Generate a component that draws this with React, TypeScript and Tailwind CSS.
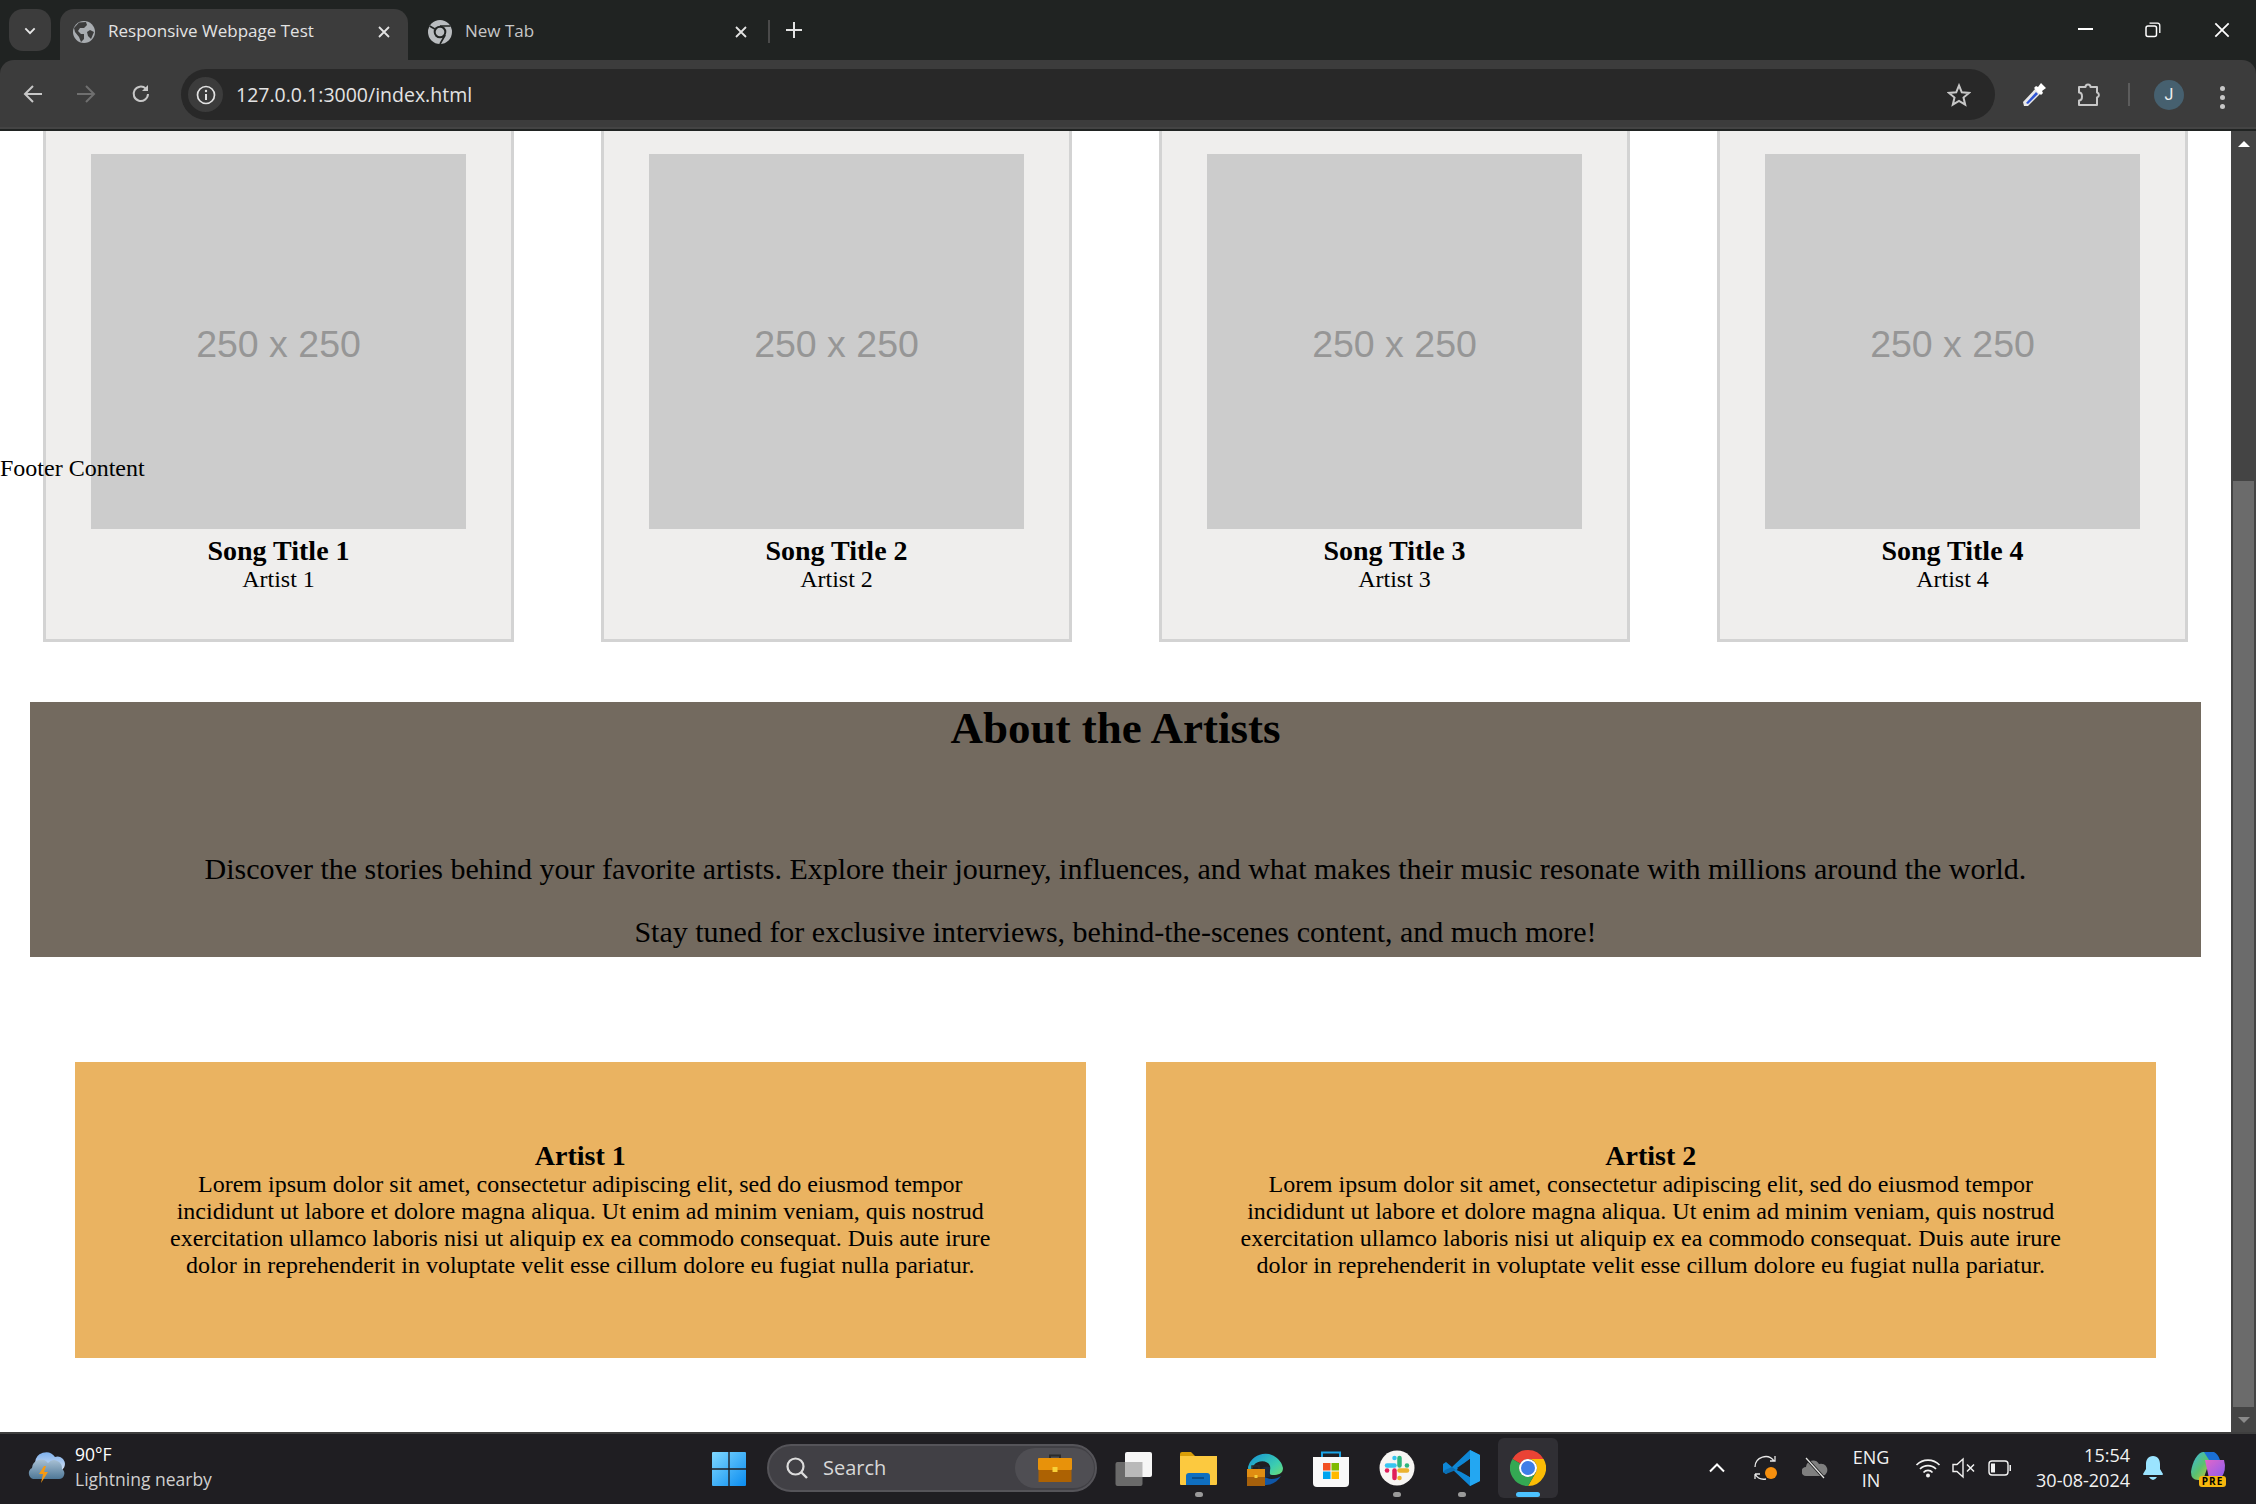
import React from "react";

const UI = "font-['Open_Sans',sans-serif]";
const SERIF = "font-['Liberation_Serif',serif]";

function GlobeFav() {
  return (
    <svg width="24" height="24" viewBox="0 0 24 24">
      <circle cx="12" cy="12" r="11" fill="#a9adb1" />
      <path d="M7 2.6 L14 2 L15 5 L12 8 L8 8 L6 11 L9 14 L12 14 L12 19 L9 22 L7 17 L3 12 L2 8Z" fill="#3c3c3c" />
      <path d="M22 12 L18 10 L15 12 L16 16 L19 19 Z" fill="#3c3c3c" />
    </svg>
  );
}
function ChromeGlyph() {
  return (
    <svg width="24" height="24" viewBox="0 0 36 36">
      <circle cx="18" cy="18" r="18" fill="#b9bcbf" />
      <path d="M18 9H34M25.8 22.5L18 36M10.2 13.5L2.4 9" stroke="#202322" strokeWidth="2.5" fill="none" />
      <circle cx="18" cy="18" r="9.5" fill="#202322" />
      <circle cx="18" cy="18" r="6.5" fill="#b9bcbf" />
    </svg>
  );
}
function XIcon({ s = 12, w = 1.8, c = "#e3e3e3" }: { s?: number; w?: number; c?: string }) {
  return (
    <svg width={s} height={s} viewBox="0 0 12 12">
      <path d="M1 1L11 11M11 1L1 11" stroke={c} strokeWidth={w} />
    </svg>
  );
}
function Arrow({ c, flip }: { c: string; flip?: boolean }) {
  return (
    <svg width="22" height="22" viewBox="0 0 22 22" className={flip ? "-scale-x-100" : ""}>
      <path d="M20 11H3M11 3L3 11L11 19" stroke={c} strokeWidth="2" fill="none" />
    </svg>
  );
}
function Reload() {
  return (
    <svg width="22" height="22" viewBox="0 0 22 22">
      <path d="M18 11A7.2 7.2 0 1 1 15.8 5.6" stroke="#c7c7c7" strokeWidth="2" fill="none" />
      <path d="M18 2V8H12Z" fill="#c7c7c7" />
    </svg>
  );
}
function Info() {
  return (
    <svg width="20" height="20" viewBox="0 0 20 20">
      <circle cx="10" cy="10" r="8.5" stroke="#e3e3e3" strokeWidth="1.7" fill="none" />
      <path d="M10 9V15" stroke="#e3e3e3" strokeWidth="2" />
      <circle cx="10" cy="6" r="1.2" fill="#e3e3e3" />
    </svg>
  );
}
function Star() {
  return (
    <svg width="24" height="24" viewBox="0 0 24 24">
      <path d="M12 2.5L14.8 9.3L22 9.9L16.5 14.6L18.2 21.7L12 17.9L5.8 21.7L7.5 14.6L2 9.9L9.2 9.3Z" stroke="#c7c7c7" strokeWidth="2" fill="none" />
    </svg>
  );
}
function Dropper() {
  return (
    <svg width="26" height="26" viewBox="0 0 26 26">
      <path d="M3 24L2 20L15 6L20 11L7 24Z" fill="#e8e8e8" />
      <path d="M5 21L15 10L17 12L7 22Z" fill="#2f55d4" />
      <path d="M13 6L15 4L17 5L20 1L25 6L21 9L22 11L20 13Z" fill="#fff" />
    </svg>
  );
}
function Puzzle() {
  return (
    <svg width="26" height="26" viewBox="0 0 26 26">
      <path d="M3 5H9.5A2.5 2.5 0 0 1 14.5 5H21V10.5A2.6 2.6 0 0 1 21 15.5V23H3V18.5C7 18.5 7 10.5 3 10.5Z" stroke="#c7c7c7" strokeWidth="2" fill="none" strokeLinejoin="round" />
    </svg>
  );
}
function MinIcon() {
  return <div className="w-[15px] h-[2px] bg-white" />;
}
function Restore() {
  return (
    <svg width="16" height="16" viewBox="0 0 16 16">
      <rect x="1" y="4" width="10.5" height="10.5" rx="2" stroke="#fff" strokeWidth="1.5" fill="none" />
      <path d="M4.5 1.2H12.5A2.5 2.5 0 0 1 14.8 3.7V11" stroke="#fff" strokeWidth="1.3" fill="none" />
    </svg>
  );
}

function Weather() {
  return (
    <svg width="38" height="34" viewBox="0 0 38 34">
      <defs>
        <linearGradient id="wa" x1="0" y1="0" x2="0" y2="1">
          <stop offset="0" stopColor="#7fb2ee" />
          <stop offset="1" stopColor="#d5e1f2" />
        </linearGradient>
        <linearGradient id="wb" x1="0" y1="0" x2="0" y2="1">
          <stop offset="0" stopColor="#a8c0d4" />
          <stop offset="1" stopColor="#4f7897" />
        </linearGradient>
      </defs>
      <path d="M7 12A11 11 0 0 1 27 6A7 7 0 0 1 32 20H10Z" fill="url(#wa)" />
      <path d="M5 28A6 6 0 0 1 4 17A9 9 0 0 1 20 12A8 8 0 0 1 34 18A5.500 5.500 0 0 1 31 28Z" fill="url(#wb)" />
      <path d="M16 15L11 23H15L13 32L20 21H16L18 15Z" fill="#f59a14" />
    </svg>
  );
}
function WinLogo() {
  return (
    <svg width="36" height="36" viewBox="0 0 36 36">
      <defs>
        <linearGradient id="wl" x1="0" y1="0" x2="1" y2="1">
          <stop offset="0" stopColor="#7fd8ff" />
          <stop offset="1" stopColor="#0a8cf0" />
        </linearGradient>
      </defs>
      <path d="M1 2Q1 1 2 1H17.300V17.300H1ZM18.700 1H34Q35 1 35 2V17.300H18.700ZM1 18.700H17.300V35H2Q1 35 1 34ZM18.700 18.700H35V34Q35 35 34 35H18.700Z" fill="url(#wl)" />
    </svg>
  );
}
function SearchGlyph() {
  return (
    <svg width="24" height="24" viewBox="0 0 24 24">
      <circle cx="10.500" cy="10.500" r="8" stroke="#dcdcdc" strokeWidth="2.2" fill="none" />
      <path d="M16 16L22 22" stroke="#dcdcdc" strokeWidth="2.400" />
    </svg>
  );
}
function Briefcase({ w = 34, h = 28 }: { w?: number; h?: number }) {
  return (
    <svg width={w} height={h} viewBox="0 0 34 28">
      <path d="M12 5V1.500H22V5" stroke="#2b2b2b" strokeWidth="2" fill="none" />
      <rect x="0" y="4" width="34" height="12" rx="1" fill="#e8920a" />
      <rect x="0.500" y="16" width="33" height="12" fill="#ad6203" />
      <rect x="14.500" y="13" width="5" height="5" fill="#f7d038" />
    </svg>
  );
}
function TaskView() {
  return (
    <svg width="38" height="36" viewBox="0 0 38 36">
      <rect x="0.500" y="11" width="27" height="24" rx="2" fill="#6a6a6a" />
      <rect x="10" y="1" width="27" height="25" rx="2" fill="#f6f6f6" />
      <rect x="10" y="11" width="17.500" height="15" fill="#b9b9b9" />
    </svg>
  );
}
function Folder() {
  return (
    <svg width="37" height="34" viewBox="0 0 37 34">
      <path d="M0 2Q0 0 2 0H11L15 4H0Z" fill="#d99e08" />
      <path d="M0 4H37V32Q37 33 36 33H1Q0 33 0 32Z" fill="#fcc93f" />
      <path d="M6 33V24Q6 21 9 21H27Q30 21 30 24V33Z" fill="#0f6fc0" />
      <rect x="12" y="25" width="12" height="2" fill="#0a4f8c" />
    </svg>
  );
}
function Edge() {
  return (
    <svg width="37" height="37" viewBox="0 0 37 37">
      <defs>
        <linearGradient id="eg" x1="0" y1="0" x2="1" y2="1">
          <stop offset="0" stopColor="#1390d8" />
          <stop offset="0.600" stopColor="#3ccdb0" />
          <stop offset="1" stopColor="#7ee05f" />
        </linearGradient>
      </defs>
      <path d="M1 17A18 18 0 0 1 36 18C36 24 31 25 26 25C20 25 24 20 23 16C21 10 11 10 7 15C5 17 3 24 6 30C2 27 1 22 1 17Z" fill="url(#eg)" />
      <path d="M7 33C16 37 28 36 34 26C30 29 24 30 20 28C16 26 13 28 7 33Z" fill="#0f57a8" />
      <path d="M13 24C12 18 18 15 23 17C24 20 21 24 24 26C21 28 15 28 13 24Z" fill="#1c2a3f" />
      <path d="M5 21V16H12V21" stroke="#2b2b2b" strokeWidth="1.500" fill="none" />
      <rect x="0" y="19" width="18" height="8" fill="#e08d12" />
      <rect x="0" y="27" width="18" height="9" fill="#a5600c" />
      <rect x="7.500" y="25" width="3" height="3" fill="#f3cd3a" />
    </svg>
  );
}
function Store() {
  return (
    <svg width="36" height="36" viewBox="0 0 36 36">
      <path d="M9 6V1.500H27V6" stroke="#1ba4e6" strokeWidth="2" fill="none" />
      <path d="M0 6H36V32Q36 36 32 36H4Q0 36 0 32Z" fill="#f8f8f8" />
      <rect x="10" y="12" width="7.500" height="7.500" fill="#f25022" />
      <rect x="18.500" y="12" width="7.500" height="7.500" fill="#7fba00" />
      <rect x="10" y="20.500" width="7.500" height="7.500" fill="#00a4ef" />
      <rect x="18.500" y="20.500" width="7.500" height="7.500" fill="#ffb900" />
    </svg>
  );
}
function Slack() {
  return (
    <svg width="36" height="36" viewBox="0 0 36 36">
      <circle cx="18" cy="18" r="17.500" fill="#f7f5f3" />
      <g strokeWidth="4.500" strokeLinecap="round" fill="none">
        <path d="M8 15.500H15.500" stroke="#36c5f0" />
        <path d="M15.500 8V8.100" stroke="#36c5f0" />
        <path d="M20.500 8V15.500" stroke="#2eb67d" />
        <path d="M28 15.500H27.900" stroke="#2eb67d" />
        <path d="M20.500 20.500H28" stroke="#ecb22e" />
        <path d="M20.500 28V27.900" stroke="#ecb22e" />
        <path d="M15.500 20.500V28" stroke="#e01e5a" />
        <path d="M8 20.500H8.100" stroke="#e01e5a" />
      </g>
    </svg>
  );
}
function VSCode() {
  return (
    <svg width="37" height="36" viewBox="0 0 37 36">
      <path d="M27 0L37 5V31L27 36L9 19L3 24L0 22V14L3 12L9 17Z" fill="#0e87d6" />
      <path d="M27 0L37 5V31L27 36Z" fill="#23a7f2" />
      <path d="M27 9L14 18L27 27Z" fill="#1f1e22" />
      <path d="M3 24L0 22L2 20L9 17L13 20Z" fill="#0a6fb5" />
      <path d="M27 9L22 13L13.500 20L18 22L27 27Z" fill="#1f1e22" />
    </svg>
  );
}
function ChromeColor() {
  return (
    <svg width="36" height="36" viewBox="0 0 36 36">
      <path d="M18 0A18 18 0 0 1 33.600 9H18A9 9 0 0 0 10.200 13.500L2.400 9A18 18 0 0 1 18 0Z" fill="#ea4335" />
      <path d="M33.600 9A18 18 0 0 1 18 36L25.800 22.500A9 9 0 0 0 18 9Z" fill="#fbbc05" />
      <path d="M18 36A18 18 0 0 1 2.400 9L10.200 13.500A9 9 0 0 0 25.800 22.500Z" fill="#34a853" />
      <circle cx="18" cy="18" r="9" fill="#fff" />
      <circle cx="18" cy="18" r="7" fill="#3f7ee8" />
    </svg>
  );
}
function Chevron({ s = 14, w = 2, c = "#fff", path = "M2 10L9 3L16 10", vb = "0 0 18 13" }: { s?: number; w?: number; c?: string; path?: string; vb?: string }) {
  return (
    <svg width={s} height={s} viewBox={vb}>
      <path d={path} stroke={c} strokeWidth={w} fill="none" />
    </svg>
  );
}
function SyncIcon() {
  return (
    <svg width="26" height="28" viewBox="0 0 26 28">
      <path d="M2 13A10.500 10.500 0 0 1 21 7M22 2V7H17" stroke="#e8e8e8" strokeWidth="1.300" fill="none" />
      <path d="M2 20V25M2 20H7M2 20A10.500 10.500 0 0 0 13 25" stroke="#e8e8e8" strokeWidth="1.300" fill="none" />
      <circle cx="18" cy="19" r="6" fill="#f7900e" />
    </svg>
  );
}
function OneDriveOff() {
  return (
    <svg width="26" height="24" viewBox="0 0 26 24">
      <path d="M4 20A4.500 4.500 0 0 1 4 11A7 7 0 0 1 17 8A5.500 5.500 0 0 1 21 20Z" fill="#7f7f7f" />
      <path d="M4 2L22 22" stroke="#1f1f1f" strokeWidth="3" />
      <path d="M4 2L22 22" stroke="#e6e6e6" strokeWidth="1.200" />
    </svg>
  );
}
function Wifi() {
  return (
    <svg width="26" height="20" viewBox="0 0 26 20">
      <path d="M1.500 7A16 16 0 0 1 24.500 7M5 11A11 11 0 0 1 21 11M8.500 14.500A6 6 0 0 1 17.500 14.500" stroke="#f2f2f2" strokeWidth="1.700" fill="none" />
      <circle cx="13" cy="17.500" r="2" fill="#f2f2f2" />
    </svg>
  );
}
function Speaker() {
  return (
    <svg width="24" height="22" viewBox="0 0 24 22">
      <path d="M1 7.500H5L11 2V20L5 14.500H1Z" stroke="#f2f2f2" strokeWidth="1.400" fill="none" />
      <path d="M15 7.500L22 14.500M22 7.500L15 14.500" stroke="#f2f2f2" strokeWidth="1.500" />
    </svg>
  );
}
function Battery() {
  return (
    <svg width="24" height="16" viewBox="0 0 24 16">
      <rect x="1" y="1" width="19" height="14" rx="3" stroke="#f2f2f2" strokeWidth="1.400" fill="none" />
      <rect x="3" y="3.500" width="4" height="9" fill="#f2f2f2" />
      <path d="M21.500 5H23V11H21.500Z" fill="#f2f2f2" />
    </svg>
  );
}
function Bell() {
  return (
    <svg width="22" height="26" viewBox="0 0 22 26">
      <path d="M11 1C6 1 4 5 4 9V14L1 19Q1 20 2 20H20Q21 20 21 19L18 14V9C18 5 16 1 11 1Z" fill="#9be4ff" />
      <path d="M7 22H15Q13 25 11 25Q9 25 7 22Z" fill="#9be4ff" />
    </svg>
  );
}
function Copilot() {
  return (
    <div className="relative w-[36px] h-[36px]">
      <svg width="36" height="30" viewBox="0 0 36 30">
        <defs>
          <linearGradient id="cp1" x1="0" y1="0" x2="1" y2="1">
            <stop offset="0" stopColor="#38b7e8" />
            <stop offset="0.500" stopColor="#5ac16f" />
            <stop offset="1" stopColor="#e6c52d" />
          </linearGradient>
          <linearGradient id="cp2" x1="0" y1="0" x2="1" y2="1">
            <stop offset="0" stopColor="#e267c8" />
            <stop offset="1" stopColor="#8a5cf0" />
          </linearGradient>
        </defs>
        <path d="M12 0H22L12 28H7Q0 28 0 20C1 10 7 0 12 0Z" fill="url(#cp1)" />
        <path d="M14 8H33Q36 18 30 26H18Z" fill="url(#cp2)" />
        <path d="M13 0H23Q27 2 29 8H18Z" fill="#1a6fd6" />
      </svg>
      <div className={`absolute left-[8px] top-[24px] w-[27px] h-[11px] rounded-[3px] bg-[#f6b70e] text-[10px] leading-[11px] text-center font-bold text-black tracking-[1px] ${UI}`}>PRE</div>
    </div>
  );
}

function TitleBar() {
  return (
    <div className="flex h-[60px] bg-[#202322] pl-[9px]">
      <div className="mt-[9px] w-[42px] h-[42px] rounded-[14px] bg-[#3c3c3c] flex items-center justify-center">
        <Chevron s={14} w={2.400} c="#e6e6e6" path="M3 5L9 11L15 5" vb="0 0 18 14" />
      </div>
      <div className="ml-[9px] mt-[9px] w-[348px] h-[51px] rounded-t-[14px] bg-[#3c3c3c] flex items-start pt-[11px] pl-[12px]">
        <GlobeFav />
        <span className={`ml-[12px] -mt-[1px] text-[17px] leading-[24px] text-[#e3e3e3] w-[258px] whitespace-nowrap ${UI}`}>Responsive Webpage Test</span>
        <span className="mt-[6px] ml-[12px]"><XIcon /></span>
      </div>
      <div className="ml-[20px] mt-[20px] w-[319px] flex items-start">
        <ChromeGlyph />
        <span className={`ml-[13px] -mt-[1px] text-[17px] leading-[24px] text-[#c7c7c7] w-[270px] whitespace-nowrap ${UI}`}>New Tab</span>
        <span className="mt-[6px]"><XIcon /></span>
      </div>
      <div className="ml-[21px] mt-[20px] w-[2px] h-[23px] bg-[#4a4a4a]" />
      <div className="ml-[16px] mt-[22px]">
        <svg width="16" height="16" viewBox="0 0 16 16"><path d="M8 0V16M0 8H16" stroke="#e3e3e3" strokeWidth="2" /></svg>
      </div>
      <div className="ml-auto flex">
        <div className="w-[68px] flex justify-center pt-[28px]"><MinIcon /></div>
        <div className="w-[68px] flex justify-center pt-[22px]"><Restore /></div>
        <div className="w-[69px] pl-[27px] pt-[22px]"><XIcon s={16} w={1.300} c="#fff" /></div>
      </div>
    </div>
  );
}

function Toolbar() {
  return (
    <div className="h-[71px] bg-[#202322]">
      <div className="h-[69px] rounded-t-[14px] bg-[#3c3c3c] flex items-start pt-[9px] pl-[22px] border-b-[2px] border-[#444444]">
        <div className="mt-[14px]"><Arrow c="#c7c7c7" /></div>
        <div className="mt-[14px] ml-[31px]"><Arrow c="#6f6f6f" flip /></div>
        <div className="mt-[14px] ml-[33px]"><Reload /></div>
        <div className="ml-[29px] w-[1814px] h-[51px] rounded-full bg-[#282828] flex items-center pl-[7px]">
          <div className="w-[35px] h-[35px] rounded-full bg-[#3c3c3c] flex items-center justify-center"><Info /></div>
          <span className={`ml-[13px] text-[19.500px] text-[#e3e3e3] ${UI}`}>127.0.0.1:3000/index.html</span>
          <div className="ml-auto mr-[24px] flex"><Star /></div>
        </div>
        <div className="mt-[13px] ml-[26px]"><Dropper /></div>
        <div className="mt-[13px] ml-[29px]"><Puzzle /></div>
        <div className="mt-[14px] ml-[26px] w-[2px] h-[23px] bg-[#5c5c5c]" />
        <div className="mt-[11px] ml-[24px] w-[30px] h-[30px] rounded-full bg-[#46606f] flex items-center justify-center text-[16px] text-[#f0f0f0]"><span className="font-['Roboto',sans-serif]">J</span></div>
        <div className="mt-[17px] ml-[36px] flex flex-col gap-[4px]">
          <div className="w-[5px] h-[5px] rounded-full bg-[#c7c7c7]" />
          <div className="w-[5px] h-[5px] rounded-full bg-[#c7c7c7]" />
          <div className="w-[5px] h-[5px] rounded-full bg-[#c7c7c7]" />
        </div>
      </div>
    </div>
  );
}

function SongCard({ n }: { n: number }) {
  return (
    <div className="w-[471px] h-[511px] bg-[#efeeed] border-x-[3px] border-b-[3px] border-[#d3d3d3] pt-[23px] flex flex-col items-center text-center">
      <div className="w-[375px] h-[375px] shrink-0 bg-[#cccccc] flex items-center justify-center pt-[5px]">
        <span className="font-['Liberation_Sans',sans-serif] text-[37.500px] text-[#969696]">250 x 250</span>
      </div>
      <div className="mt-[6px] text-[28px] leading-[31px] font-bold">Song Title {n}</div>
      <div className="text-[24px] leading-[27px]">Artist {n}</div>
    </div>
  );
}

function ArtistCard({ n }: { n: number }) {
  return (
    <div className="w-[1010.500px] h-[296px] bg-[#eab361] pt-[78px] px-[90px] text-center">
      <div className="text-[28px] leading-[31px] font-bold">Artist {n}</div>
      <p className="text-[24px] leading-[27px]">
        Lorem ipsum dolor sit amet, consectetur adipiscing elit, sed do eiusmod tempor incididunt ut labore et dolore magna aliqua. Ut enim ad minim veniam, quis nostrud exercitation ullamco laboris nisi ut aliquip ex ea commodo consequat. Duis aute irure dolor in reprehenderit in voluptate velit esse cillum dolore eu fugiat nulla pariatur.
      </p>
    </div>
  );
}

function Page() {
  return (
    <div className="flex h-[1301px]">
      <main className={`relative w-[2231px] bg-white text-black overflow-hidden px-[30px] ${SERIF}`}>
        <div className="flex justify-between px-[13px]">
          <SongCard n={1} />
          <SongCard n={2} />
          <SongCard n={3} />
          <SongCard n={4} />
        </div>
        <section className="mt-[60px] h-[255px] bg-[#736a5f] text-center">
          <h1 className="text-[45px] leading-[52px] font-bold">About the Artists</h1>
          <p className="mt-[98px] text-[30px] leading-[34px]">Discover the stories behind your favorite artists. Explore their journey, influences, and what makes their music resonate with millions around the world.</p>
          <p className="mt-[29px] text-[30px] leading-[34px]">Stay tuned for exclusive interviews, behind-the-scenes content, and much more!</p>
        </section>
        <div className="mt-[105px] flex gap-[60px] pl-[45px]">
          <ArtistCard n={1} />
          <ArtistCard n={2} />
        </div>
        <div className="absolute left-0 top-[323px] text-[24px] leading-[28px] whitespace-nowrap">Footer Content</div>
      </main>
      <div className="w-[25px] bg-[#444444] flex flex-col items-center">
        <div className="mt-[10px] w-0 h-0 border-x-[6px] border-x-transparent border-b-[6px] border-b-white" />
        <div className="mt-[334px] w-[21px] h-[926px] bg-[#6b6b6b]" />
        <div className="mt-[10px] w-0 h-0 border-x-[6px] border-x-transparent border-t-[6px] border-t-[#8a8a8a]" />
      </div>
    </div>
  );
}

function Taskbar() {
  return (
    <div className={`h-[72px] bg-[#1f1e22] border-t-[2px] border-[#3f3f3f] flex items-start text-white ${UI}`}>
      <div className="ml-[28px] mt-[17px]"><Weather /></div>
      <div className="ml-[9px] mt-[7px] w-[140px]">
        <div className="text-[17.500px] leading-[26px] text-white">90°F</div>
        <div className="text-[17.500px] leading-[24px] text-[#cfcfcf] whitespace-nowrap">Lightning nearby</div>
      </div>
      <div className="ml-[496px] mt-[17px]"><WinLogo /></div>
      <div className="ml-[20px] mt-[10px] w-[330px] h-[48px] rounded-full bg-[#414045] border-[2px] border-[#555459] flex items-center pl-[16px]">
        <SearchGlyph />
        <span className="ml-[14px] text-[20px] text-[#d8d8d8]">Search</span>
        <div className="ml-auto mr-[1px] w-[79px] h-[40px] rounded-full bg-[#4f4e53] flex items-center justify-center"><Briefcase /></div>
      </div>
      <div className="ml-[18px] mt-[17px]"><TaskView /></div>
      <div className="ml-[27px] mt-[18px] flex flex-col items-center">
        <Folder />
        <div className="mt-[6px] w-[8px] h-[5px] rounded-full bg-[#9a9a9a]" />
      </div>
      <div className="ml-[30px] mt-[16px]"><Edge /></div>
      <div className="ml-[29px] mt-[17px]"><Store /></div>
      <div className="ml-[30px] mt-[16px] flex flex-col items-center">
        <Slack />
        <div className="mt-[6px] w-[8px] h-[5px] rounded-full bg-[#9a9a9a]" />
      </div>
      <div className="ml-[28px] mt-[16px] flex flex-col items-center">
        <VSCode />
        <div className="mt-[6px] w-[8px] h-[5px] rounded-full bg-[#9a9a9a]" />
      </div>
      <div className="relative ml-[18px] mt-[4px] w-[60px] h-[60px] rounded-[6px] bg-[#302f34] flex flex-col items-center pt-[12px]">
        <ChromeColor />
        <div className="mt-[6px] w-[24px] h-[5px] rounded-full bg-[#4cc2ff]" />
      </div>
      <div className="ml-[150px] mt-[25px]"><Chevron s={18} w={2} /></div>
      <div className="ml-[27px] mt-[20px]"><SyncIcon /></div>
      <div className="ml-[23px] mt-[22px]"><OneDriveOff /></div>
      <div className="ml-[26px] mt-[12px] w-[34px] text-center text-[18px] leading-[23px] text-[#f2f2f2]">
        <div className="-ml-[4px] -mr-[4px]">ENG</div>
        <div>IN</div>
      </div>
      <div className="ml-[27px] mt-[24px]"><Wifi /></div>
      <div className="ml-[11px] mt-[23px]"><Speaker /></div>
      <div className="ml-[12px] mt-[26px]"><Battery /></div>
      <div className="mt-[9px] w-[118px] text-right text-[18px] leading-[25px] text-[#f2f2f2] whitespace-nowrap">
        <div>15:54</div>
        <div>30-08-2024</div>
      </div>
      <div className="ml-[12px] mt-[21px]"><Bell /></div>
      <div className="ml-[27px] mt-[18px]"><Copilot /></div>
    </div>
  );
}

export default function App() {
  return (
    <div className="w-[2256px] h-[1504px] overflow-hidden bg-white">
      <TitleBar />
      <Toolbar />
      <Page />
      <Taskbar />
    </div>
  );
}
